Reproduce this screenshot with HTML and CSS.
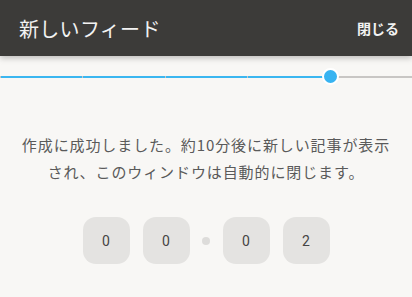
FILE: index.html
```html
<!DOCTYPE html>
<html lang="ja">
<head>
  <meta charset="UTF-8">
  <meta name="viewport" content="width=device-width, initial-scale=1.0">
  <title>新しいフィード</title>
  <link rel="stylesheet" href="styles.css">
</head>
<body>

<header class="topbar">
  <h1 class="title">新しいフィード</h1>
  <button class="close-btn">閉じる</button>
</header>

<div class="progress">
  <div class="seg done"></div>
  <div class="seg done"></div>
  <div class="seg done"></div>
  <div class="seg done current">
    <span class="knob"></span>
  </div>
  <div class="seg"></div>
</div>

<p class="message">
  作成に成功しました。約10分後に新しい記事が表示<br>
  され、このウィンドウは自動的に閉じます。
</p>

<div class="countdown">
  <div class="digit">0</div>
  <div class="digit">0</div>
  <div class="sep"></div>
  <div class="digit">0</div>
  <div class="digit">2</div>
</div>

</body>
</html>
```

FILE: styles.css
```css
/* 新規フィード作成完了ダイアログ */
body {
  margin: 0;
  background-color: #f8f7f5;
  font-family: "Noto Sans CJK JP", "Noto Sans", sans-serif;
  color: #555;
}
.topbar {
  height: 56px;
  background-color: #3c3b39;
  display: flex;
  align-items: center;
  justify-content: space-between;
  padding: 0 13px 0 19px;
  box-shadow: 0 2px 6px rgba(0, 0, 0, 0.25);
}
.title {
  margin: 0;
  font-size: 20px;
  font-weight: normal;
  color: #f2f2f2;
  letter-spacing: 0.3px;
}
.close-btn {
  background: none;
  border: none;
  padding: 0;
  color: #f2f2f2;
  font-family: inherit;
  font-size: 14px;
  font-weight: bold;
  cursor: pointer;
}
.progress {
  display: flex;
  height: 2px;
  margin-top: 20px;
  background-color: #c8c6c4;
}
.seg {
  flex: 1;
  margin-left: 1px;
}
.seg.done {
  background-color: #3bb6f0;
}
.seg.current {
  position: relative;
}
.knob {
  position: absolute;
  right: -9px;
  top: -8px;
  width: 13px;
  height: 13px;
  border-radius: 50%;
  background-color: #37b3f1;
  border: 2px solid #fff;
}
.message {
  margin: 53px 0 0;
  text-align: center;
  font-size: 15px;
  line-height: 27px;
  letter-spacing: 0.9px;
  color: #5a5a5a;
}
.countdown {
  display: flex;
  justify-content: center;
  align-items: center;
  gap: 13px;
  margin-top: 32px;
}
.digit {
  width: 47px;
  height: 47px;
  border-radius: 13px;
  background-color: #e4e3e1;
  display: flex;
  align-items: center;
  justify-content: center;
  font-family: Roboto, "Noto Sans", sans-serif;
  font-size: 14px;
  color: #444;
}
.sep {
  width: 8px;
  height: 8px;
  border-radius: 50%;
  background-color: #dddcda;
  margin: 0 -0.5px;
}
```
